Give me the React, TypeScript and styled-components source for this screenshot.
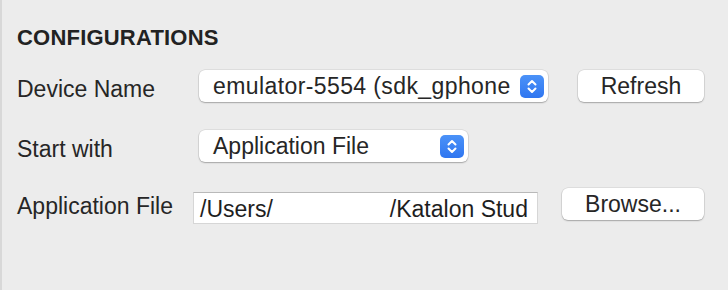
import React from "react";
import styled, { createGlobalStyle } from "styled-components";

const GlobalStyle = createGlobalStyle`
  html, body {
    margin: 0;
    padding: 0;
    background: #ececec;
  }
  body {
    font-family: "Liberation Sans", Arial, sans-serif;
    color: #262626;
  }
`;

function Stepper(): JSX.Element {
  return (
    <StepperBox>
      <svg width="24" height="23" viewBox="0 0 24 23">
        <path
          d="M8.5 9.5 L12 6 L15.5 9.5"
          fill="none"
          stroke="#fff"
          strokeWidth="2"
          strokeLinecap="round"
          strokeLinejoin="round"
        />
        <path
          d="M8.5 13.5 L12 17 L15.5 13.5"
          fill="none"
          stroke="#fff"
          strokeWidth="2"
          strokeLinecap="round"
          strokeLinejoin="round"
        />
      </svg>
    </StepperBox>
  );
}

function App(): JSX.Element {
  return (
    <>
      <GlobalStyle />
      <Panel>
        <Heading>CONFIGURATIONS</Heading>
        <Row $top={19}>
          <Label $width={182} $offset={3}>
            Device Name
          </Label>
          <Select $width={349}>
            <SelectText $spacing={0.4}>emulator-5554 (sdk_gphone</SelectText>
            <Stepper />
          </Select>
          <PushButton $width={126}>Refresh</PushButton>
        </Row>
        <Row $top={28}>
          <Label $width={182} $offset={3}>
            Start with
          </Label>
          <Select $width={269}>
            <SelectText $spacing={0}>Application File</SelectText>
            <Stepper />
          </Select>
        </Row>
        <Row $top={26}>
          <Label $width={176} $offset={2}>
            Application File
          </Label>
          <TextField>
            <FieldText>
              /Users/
              <Redacted />
              /Katalon Stud
            </FieldText>
          </TextField>
          <PushButton $width={142}>Browse...</PushButton>
        </Row>
      </Panel>
    </>
  );
}

const Panel = styled.main`
  box-sizing: border-box;
  height: 100vh;
  border-left: 2px solid #d8d8d8;
  padding: 25px 24px 0 15px;
  display: flex;
  flex-direction: column;
`;

const Heading = styled.h2`
  margin: 0;
  font-size: 22px;
  line-height: 26px;
  font-weight: 700;
  color: #222;
  letter-spacing: 0.2px;
`;

const Row = styled.div<{ $top: number }>`
  display: flex;
  align-items: flex-start;
  margin-top: ${(p) => p.$top}px;
`;

const Label = styled.div<{ $width: number; $offset: number }>`
  width: ${(p) => p.$width}px;
  flex: none;
  margin-top: ${(p) => p.$offset}px;
  margin-bottom: -${(p) => p.$offset}px;
  font-size: 23px;
  line-height: 32px;
  white-space: nowrap;
`;

const Select = styled.div<{ $width: number }>`
  box-sizing: border-box;
  width: ${(p) => p.$width}px;
  height: 32px;
  display: flex;
  align-items: center;
  padding: 0 4px 0 14px;
  background: #fff;
  border-radius: 6px;
  box-shadow: 0 0 0 0.5px rgba(0, 0, 0, 0.12), 0 1px 1.5px rgba(0, 0, 0, 0.25);
`;

const SelectText = styled.span<{ $spacing: number }>`
  flex: 1;
  min-width: 0;
  white-space: nowrap;
  margin-right: 8px;
  font-size: 23px;
  line-height: 32px;
  letter-spacing: ${(p) => p.$spacing}px;
`;

const StepperBox = styled.span`
  flex: none;
  display: flex;
  width: 24px;
  height: 23px;
  border-radius: 5px;
  background: linear-gradient(#4b92f8, #2f76f0);
`;

const PushButton = styled.button<{ $width: number }>`
  box-sizing: border-box;
  margin-left: auto;
  width: ${(p) => p.$width}px;
  height: 32px;
  padding: 0;
  border: none;
  background: #fff;
  border-radius: 6px;
  box-shadow: 0 0 0 0.5px rgba(0, 0, 0, 0.12), 0 1px 1.5px rgba(0, 0, 0, 0.25);
  font-family: "Liberation Sans", Arial, sans-serif;
  font-size: 23px;
  line-height: 32px;
  color: #262626;
`;

const TextField = styled.div`
  box-sizing: border-box;
  width: 345px;
  height: 32px;
  margin-top: 4px;
  display: flex;
  padding: 0 5px 0 6px;
  background: #fff;
  border: 1px solid #d6d6d6;
  border-top-color: #b9b9b9;
`;

const FieldText = styled.span`
  flex: 1;
  min-width: 0;
  white-space: nowrap;
  font-size: 23px;
  line-height: 32px;
  color: #1e1e1e;
`;

const Redacted = styled.span`
  display: inline-block;
  width: 117px;
`;

export default App;
